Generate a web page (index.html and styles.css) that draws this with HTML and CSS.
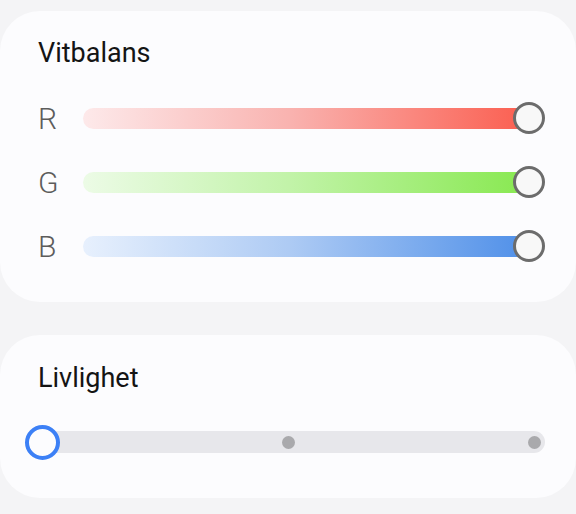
FILE: index.html
```html
<!DOCTYPE html>
<html lang="sv">
<head>
<meta charset="utf-8">
<link rel="stylesheet" href="styles.css">
</head>
<body>
<div class="page">
  <section class="card card-wb">
    <h2 class="title">Vitbalans</h2>
    <div class="rows">
      <div class="row">
        <span class="label">R</span>
        <div class="track track-r"><span class="thumb"></span></div>
      </div>
      <div class="row">
        <span class="label">G</span>
        <div class="track track-g"><span class="thumb"></span></div>
      </div>
      <div class="row">
        <span class="label">B</span>
        <div class="track track-b"><span class="thumb"></span></div>
      </div>
    </div>
  </section>
  <section class="card card-vivid">
    <h2 class="title">Livlighet</h2>
    <div class="step-slider">
      <div class="step-track">
        <span class="dot"></span>
        <span class="dot"></span>
        <span class="dot"></span>
      </div>
      <span class="step-thumb"></span>
    </div>
  </section>
</div>
</body>
</html>
```
FILE: styles.css
```css
html, body {
  margin: 0;
  padding: 0;
  background: #f4f4f6;
  font-family: Roboto, "Liberation Sans", sans-serif;
}
.page {
  width: 576px;
  height: 514px;
  padding-top: 11px;
  box-sizing: border-box;
  display: flex;
  flex-direction: column;
  gap: 33px;
}
.card {
  background: #fcfcfe;
  border-radius: 40px;
  box-sizing: border-box;
}
.title {
  margin: 0;
  font-size: 27px;
  line-height: 32px;
  font-weight: 400;
  color: #141414;
}
.card-wb {
  height: 291px;
  padding: 26px 36px 0 38px;
  display: flex;
  flex-direction: column;
}
.rows {
  margin-top: 17px;
  display: flex;
  flex-direction: column;
}
.row {
  height: 64px;
  display: flex;
  align-items: center;
}
.label {
  width: 45px;
  font-size: 30px;
  line-height: 34px;
  font-weight: 300;
  color: #5c5c5c;
  padding-top: 2px;
}
.track {
  flex: 1;
  height: 21px;
  border-radius: 10.5px;
  position: relative;
}
.track-r { background: linear-gradient(90deg, #fde9ea 0%, #f9b3b0 45%, #fb5a4b 100%); }
.track-g { background: linear-gradient(90deg, #ecfbe6 0%, #c2f3a9 45%, #85e84c 100%); }
.track-b { background: linear-gradient(90deg, #e7f0fd 0%, #aecbf4 45%, #4b8de8 100%); }
.thumb {
  position: absolute;
  right: -5px;
  top: 50%;
  width: 32px;
  height: 32px;
  margin-top: -16px;
  box-sizing: border-box;
  border-radius: 50%;
  border: 3px solid #6c6c6c;
  background: #f8f8f8;
}
.card-vivid {
  height: 163px;
  padding: 27px 31px 0 31px;
}
.card-vivid .title {
  padding-left: 7px;
}
.step-slider {
  margin-top: 26px;
  height: 44px;
  position: relative;
  display: flex;
  align-items: center;
}
.step-track {
  flex: 1;
  height: 22px;
  border-radius: 11px;
  background: #e7e7eb;
  display: flex;
  align-items: center;
  justify-content: space-between;
  padding: 0 4.5px;
}
.dot {
  width: 13px;
  height: 13px;
  border-radius: 50%;
  background: #a9a9ac;
}
.step-thumb {
  position: absolute;
  left: -6px;
  top: 50%;
  width: 35px;
  height: 35px;
  margin-top: -17.5px;
  box-sizing: border-box;
  border-radius: 50%;
  border: 4px solid #3c80f6;
  background: #fcfcfe;
}
```
